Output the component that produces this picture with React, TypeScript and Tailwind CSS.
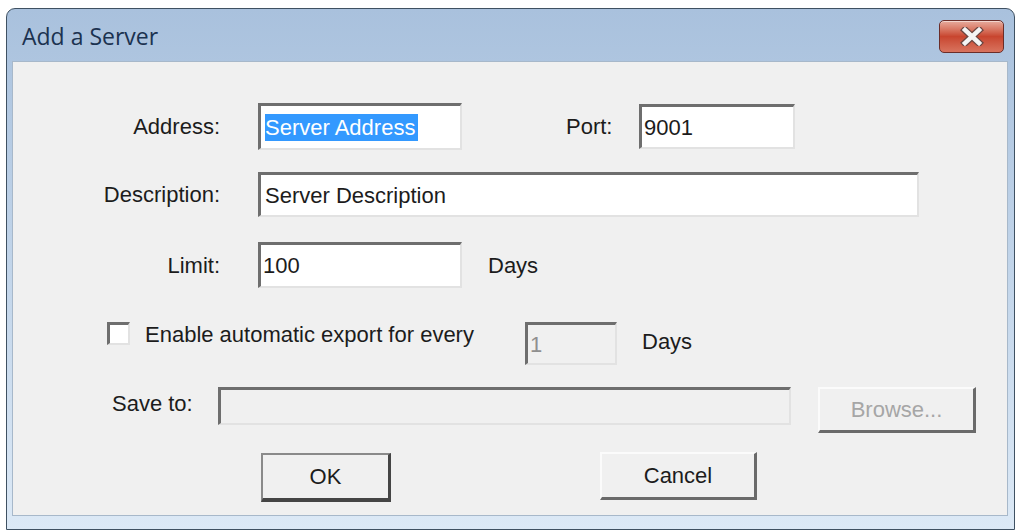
const sunken =
  "border-t-[3px] border-l-[3px] border-r-[2px] border-b-[2px] border-t-[#6e6e6e] border-l-[#6e6e6e] border-r-[#e2e2e2] border-b-[#e2e2e2]";
const raised =
  "border-t-[2px] border-l-[2px] border-r-[3px] border-b-[3px] border-t-[#fbfbfb] border-l-[#fbfbfb] border-r-[#6a6a6a] border-b-[#6a6a6a]";

function CloseButton() {
  return (
    <div className="w-[65px] h-[33px] rounded-[5px] border border-[#6b2d28] bg-gradient-to-b from-[#e6ab9d] via-[#c8452f] to-[#d8735e] flex items-center justify-center shadow-[inset_0_1px_0_rgba(255,255,255,0.5)]">
      <svg width="24" height="19" viewBox="0 0 24 19">
        <path d="M5 3 L19 16 M19 3 L5 16" stroke="#6a4540" strokeWidth="7" strokeLinecap="square" />
        <path d="M5 3 L19 16 M19 3 L5 16" stroke="#f4f4f4" strokeWidth="4.5" strokeLinecap="square" />
      </svg>
    </div>
  );
}

function Label({ text, width }: { text: string; width: string }) {
  return <div className={`${width} text-right shrink-0`}>{text}</div>;
}

export default function App() {
  return (
    <div className="w-[1018px] h-[532px] bg-white pt-[8px] pl-[6px] font-['Liberation_Sans',Arial,sans-serif] text-[22px] leading-[25px] text-[#1c1c1c]">
      <div className="w-[1009px] h-[522px] rounded-t-[9px] border border-[#3f5162] bg-gradient-to-b from-[#a9c1dd] via-[#c2d5ea] to-[#dce9f6] flex flex-col pl-[5px] pr-[6px] pb-[13px]">
        {/* title bar */}
        <div className="h-[52px] shrink-0 flex items-start justify-between">
          <div className="pl-[10px] pt-[12px] font-['Open_Sans',sans-serif] text-[23px] leading-[30px] text-[#1b3250]">
            Add a Server
          </div>
          <div className="pt-[11px] pr-[4px]">
            <CloseButton />
          </div>
        </div>

        {/* dialog body */}
        <div className="flex-1 bg-[#f0f0f0] border border-[#a7b8ca] flex flex-col">
          <div className="flex items-center mt-[41px] h-[47px]">
            <Label text="Address:" width="w-[207px]" />
            <div className={`ml-[38px] w-[204px] h-[47px] bg-white ${sunken} flex items-center pl-[4px]`}>
              <span className="bg-[#3399ff] text-white leading-[27px] pr-[3px]">Server Address</span>
            </div>
            <div className="ml-[104px] w-[46px]">Port:</div>
            <div className={`ml-[27px] w-[156px] h-[45px] bg-white ${sunken} flex items-center pl-[2px]`}>9001</div>
          </div>

          <div className="flex items-center mt-[22px] h-[45px]">
            <Label text="Description:" width="w-[207px]" />
            <div className={`ml-[38px] w-[661px] h-[45px] bg-white ${sunken} flex items-center pl-[4px]`}>
              Server Description
            </div>
          </div>

          <div className="flex items-center mt-[25px] h-[46px]">
            <Label text="Limit:" width="w-[207px]" />
            <div className={`ml-[38px] w-[204px] h-[46px] bg-white ${sunken} flex items-center pl-[2px]`}>100</div>
            <div className="ml-[26px]">Days</div>
          </div>

          <div className="flex items-start mt-[34px] h-[43px]">
            <div className={`ml-[94px] w-[23px] h-[23px] bg-white ${sunken}`} />
            <div className="ml-[15px] w-[380px]">Enable automatic export for every</div>
            <div className={`w-[92px] h-[43px] bg-[#f0f0f0] ${sunken} flex items-center pl-[2px] text-[#8f8f8f]`}>1</div>
            <div className="ml-[25px] mt-[7px]">Days</div>
          </div>

          <div className="flex items-start mt-[22px] h-[46px]">
            <div className="ml-[99px] w-[86px] mt-[4px]">Save to:</div>
            <div className={`ml-[20px] w-[573px] h-[38px] bg-[#f0f0f0] ${sunken}`} />
            <div className={`ml-[27px] w-[158px] h-[46px] bg-[#f0f0f0] ${raised} flex items-center justify-center text-[#a6a6a6]`}>
              Browse...
            </div>
          </div>

          <div className="flex items-start mt-[20px]">
            <div className="ml-[248px] w-[130px] h-[49px] bg-[#f0f0f0] border-t-[2px] border-l-[2px] border-r-[3px] border-b-[4px] border-t-[#8a8a8a] border-l-[#8a8a8a] border-r-[#454545] border-b-[#454545] flex items-center justify-center">
              OK
            </div>
            <div className={`ml-[209px] -mt-[1px] w-[157px] h-[48px] bg-[#f0f0f0] ${raised} flex items-center justify-center`}>
              Cancel
            </div>
          </div>
        </div>
      </div>
    </div>
  );
}
